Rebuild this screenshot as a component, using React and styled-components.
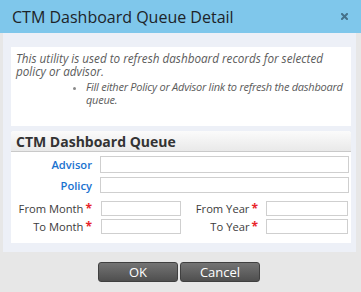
import React from 'react'
import styled, { createGlobalStyle } from 'styled-components'

const GlobalStyle = createGlobalStyle`
  html, body {
    margin: 0;
    padding: 0;
    background: #e7e7e7;
    font-family: "Open Sans", "Liberation Sans", sans-serif;
  }
`

const Dialog = styled.div`
  width: 361px;
  height: 292px;
  display: flex;
  flex-direction: column;
  background: #e7e7e7;
`

const TitleBar = styled.div`
  height: 33px;
  flex-shrink: 0;
  background: #7fc7eb;
  display: flex;
  align-items: center;
  justify-content: space-between;
  padding: 0 13px 0 12px;
  box-sizing: border-box;
`

const Title = styled.h1`
  margin: 0;
  font-size: 16px;
  font-weight: 400;
  color: #1d2328;
`

const CloseBtn = styled.span`
  display: flex;
  width: 7px;
  height: 7px;
`

const Panel = styled.div`
  margin: 0 5px 0 3px;
  padding: 14px 5px 9px 8px;
  background: #edf0f7;
  display: flex;
  flex-direction: column;
  gap: 5px;
`

const InfoBox = styled.div`
  background: #fff;
  height: 79px;
  box-sizing: border-box;
  padding: 5px 0 0 5px;
  font-size: 11.7px;
  line-height: 13px;
  font-style: italic;
  color: #5b5b5b;
`

const InfoText = styled.p`
  margin: 0;
`

const Bullets = styled.ul`
  margin: 2px 0 0;
  padding-left: 70px;
  list-style: disc;
  font-size: 11px;
  letter-spacing: -0.25px;
  line-height: 13px;
  & li::marker {
    color: #8a8a8a;
    font-size: 9px;
  }
`

const Section = styled.div`
  background: #fff;
  border-radius: 3px 3px 0 0;
  padding-bottom: 9px;
`

const SectionHeader = styled.div`
  height: 20px;
  border-bottom: 1px solid #c9c9c9;
  border-radius: 3px 3px 0 0;
  background: linear-gradient(#fbfbfb, #e9e9e9);
  display: flex;
  align-items: center;
  padding-left: 5px;
  font-size: 14px;
  font-weight: 700;
  color: #333;
`

const Form = styled.div`
  padding-top: 4px;
  display: flex;
  flex-direction: column;
`

const Row = styled.div`
  display: flex;
  align-items: center;
  height: ${p => p.$h}px;
  margin-top: ${p => p.$gap || 0}px;
`

const Label = styled.label`
  width: ${p => p.$w}px;
  flex-shrink: 0;
  text-align: right;
  font-size: 11.2px;
  line-height: 15px;
  font-weight: ${p => (p.$link ? 600 : 400)};
  color: ${p => (p.$link ? '#1a72cf' : '#3c3c3c')};
  margin-right: ${p => p.$mr}px;
  white-space: nowrap;
`

const Star = styled.span`
  color: #e8242a;
  font-weight: 700;
  font-size: 12px;
  margin-left: 2px;
`

const Input = styled.input`
  width: ${p => p.$w}px;
  height: ${p => p.$h}px;
  box-sizing: border-box;
  border: 1px solid #cfcfcf;
  background: #fff;
  padding: 0 3px;
  margin: 0;
  outline: none;
`

const Footer = styled.div`
  display: flex;
  justify-content: center;
  gap: 2px;
  padding: 10px 0 0 0;
  margin-left: -3px;
`

const Button = styled.button`
  width: 80px;
  height: 20px;
  border: 1px solid #404040;
  border-radius: 3px;
  background: linear-gradient(#747474, #4f4f4f);
  color: #fff;
  font-family: "Open Sans", "Liberation Sans", sans-serif;
  font-size: 13px;
  padding: 0;
  line-height: 18px;
  cursor: pointer;
`

export default function App() {
  return (
    <>
      <GlobalStyle />
      <Dialog>
        <TitleBar>
          <Title>CTM Dashboard Queue Detail</Title>
          <CloseBtn>
            <svg width="7" height="7" viewBox="0 0 7 7">
              <path d="M1 1 L6 6 M6 1 L1 6" stroke="#45718a" strokeWidth="2" strokeLinecap="square" />
            </svg>
          </CloseBtn>
        </TitleBar>
        <Panel>
          <InfoBox>
            <InfoText>This utility is used to refresh dashboard records for selected policy or advisor.</InfoText>
            <Bullets>
              <li>Fill either Policy or Advisor link to refresh the dashboard queue.</li>
            </Bullets>
          </InfoBox>
          <Section>
            <SectionHeader>CTM Dashboard Queue</SectionHeader>
            <Form>
              <Row $h={17}>
                <Label $w={81} $mr={8} $link>Advisor</Label>
                <Input $w={249} $h={17} />
              </Row>
              <Row $h={16} $gap={4}>
                <Label $w={81} $mr={8} $link>Policy</Label>
                <Input $w={249} $h={16} />
              </Row>
              <Row $h={15} $gap={8}>
                <Label $w={81} $mr={9}>From Month<Star>*</Star></Label>
                <Input $w={80} $h={15} />
                <Label $w={77} $mr={8}>From Year<Star>*</Star></Label>
                <Input $w={82} $h={15} />
              </Row>
              <Row $h={15} $gap={3}>
                <Label $w={81} $mr={9}>To Month<Star>*</Star></Label>
                <Input $w={80} $h={15} />
                <Label $w={77} $mr={8}>To Year<Star>*</Star></Label>
                <Input $w={82} $h={15} />
              </Row>
            </Form>
          </Section>
        </Panel>
        <Footer>
          <Button>OK</Button>
          <Button>Cancel</Button>
        </Footer>
      </Dialog>
    </>
  )
}
